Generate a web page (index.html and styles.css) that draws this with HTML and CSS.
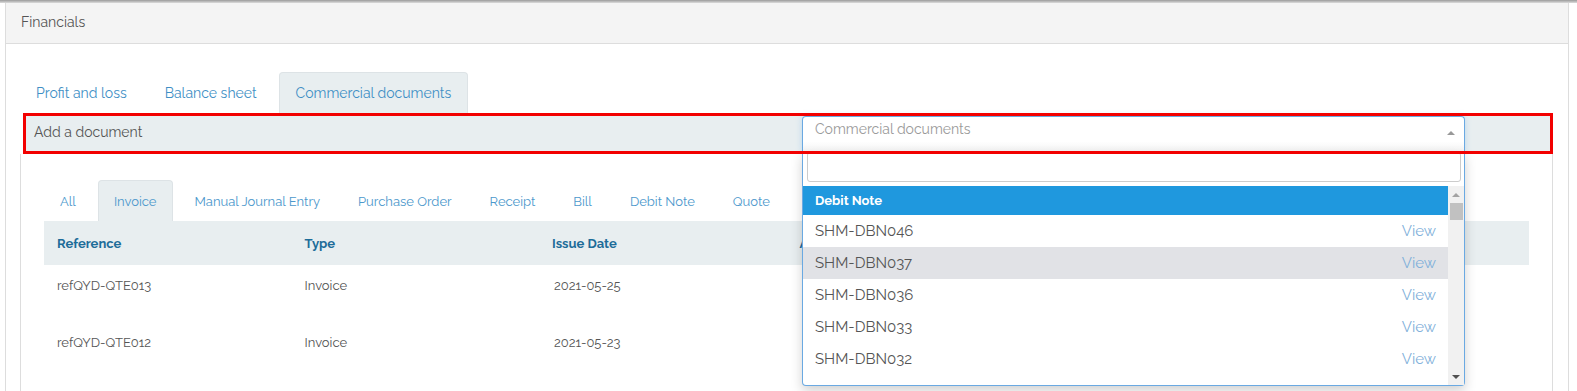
FILE: index.html
```html
<!DOCTYPE html>
<html lang="en">
<head>
<meta charset="utf-8">
<title>Financials</title>
<link rel="stylesheet" href="styles.css">
</head>
<body>
<div class="topbar"></div>
<div class="panel">
  <div class="panel-heading">Financials</div>
  <div class="panel-body">
    <ul class="tabs">
      <li class="tab">Profit and loss</li>
      <li class="tab">Balance sheet</li>
      <li class="tab active">Commercial documents</li>
    </ul>
    <div class="add-row">
      <div class="add-label">Add a document</div>
      <div class="select">
        <div class="select-box">
          <span class="placeholder">Commercial documents</span>
          <span class="caret-up"></span>
        </div>
        <div class="dropdown">
          <div class="search"><div class="search-input"></div></div>
          <div class="results">
            <div class="list">
              <div class="group">Debit Note</div>
              <div class="option"><span>SHM-DBN046</span><span class="view">View</span></div>
              <div class="option hl"><span>SHM-DBN037</span><span class="view">View</span></div>
              <div class="option"><span>SHM-DBN036</span><span class="view">View</span></div>
              <div class="option"><span>SHM-DBN033</span><span class="view">View</span></div>
              <div class="option"><span>SHM-DBN032</span><span class="view">View</span></div>
              <div class="option"><span>SHM-DBN031</span><span class="view">View</span></div>
            </div>
            <div class="scrollbar">
              <span class="arr-up"></span>
              <span class="thumb"></span>
              <span class="spacer"></span>
              <span class="arr-down"></span>
            </div>
          </div>
        </div>
      </div>
    </div>
    <div class="tab-content">
      <ul class="subtabs">
        <li class="subtab">All</li>
        <li class="subtab active">Invoice</li>
        <li class="subtab">Manual Journal Entry</li>
        <li class="subtab">Purchase Order</li>
        <li class="subtab">Receipt</li>
        <li class="subtab">Bill</li>
        <li class="subtab">Debit Note</li>
        <li class="subtab">Quote</li>
      </ul>
      <div class="table">
        <div class="trow thead">
          <div class="cell">Reference</div>
          <div class="cell">Type</div>
          <div class="cell">Issue Date</div>
          <div class="cell">Amount</div>
          <div class="cell">Status</div>
          <div class="cell">Actions</div>
        </div>
        <div class="trow">
          <div class="cell">refQYD-QTE013</div>
          <div class="cell">Invoice</div>
          <div class="cell date">2021-05-25</div>
          <div class="cell"></div>
          <div class="cell"></div>
          <div class="cell"></div>
        </div>
        <div class="trow">
          <div class="cell">refQYD-QTE012</div>
          <div class="cell">Invoice</div>
          <div class="cell date">2021-05-23</div>
          <div class="cell"></div>
          <div class="cell"></div>
          <div class="cell"></div>
        </div>
      </div>
    </div>
  </div>
</div>
</body>
</html>
```

FILE: styles.css
```css
* { box-sizing: border-box; }
html, body { margin: 0; padding: 0; background: #fff; }
body {
  font-family: Raleway, Lato, "Open Sans", "DejaVu Sans", sans-serif;
  font-variant-numeric: oldstyle-nums;
  color: #555;
  font-size: 14px;
  overflow: hidden;
  height: 391px;
}
ul { list-style: none; margin: 0; padding: 0; }

.topbar {
  height: 3px;
  background: linear-gradient(#9a9a9a, #dcdcdc);
}

.panel {
  margin: 0 8px 0 5px;
  border: 1px solid #ddd;
  border-top: none;
  border-bottom: none;
  height: 388px;
  overflow: hidden;
}
.panel-heading {
  height: 41px;
  background: #f4f4f4;
  border-bottom: 1px solid #ddd;
  padding: 0 15px;
  line-height: 38px;
  font-size: 14px;
  color: #555;
}
.panel-body {
  padding: 28px 15px 0 14px;
}

.tabs { display: flex; height: 41px; align-items: stretch; }
.tab {
  display: flex;
  align-items: center;
  padding: 0 15px;
  margin-right: 6px;
  font-size: 14px;
  color: #3f8fc5;
  border: 1px solid transparent;
  border-bottom: none;
  border-radius: 4px 4px 0 0;
}
.tab.active {
  background: #e8eef0;
  border-color: #dde3e6;
  padding: 0 16px;
}

.add-row {
  position: relative;
  margin-left: 3px;
  height: 41px;
  background: #e8eef0;
  display: grid;
  grid-template-columns: 779px 663px;
  align-items: start;
  padding-top: 3px;
}
.add-row::after {
  content: "";
  position: absolute;
  inset: 0;
  border: 3px solid #f20000;
  z-index: 20;
  pointer-events: none;
}
.add-label {
  padding-left: 11px;
  line-height: 32px;
  font-size: 14px;
  color: #555;
}

.select { position: relative; z-index: 10; }
.select-box {
  height: 36px;
  border: 1px solid #6aa9e2;
  border-bottom: none;
  border-radius: 4px 4px 0 0;
  background: linear-gradient(#fff 70%, #f2f2f2 100%);
  display: flex;
  align-items: center;
  justify-content: space-between;
  padding: 0 9px 12px 12px;
  box-shadow: 0 0 6px rgba(102, 175, 233, .35);
}
.placeholder { color: #9a9a9a; font-size: 14px; }
.caret-up {
  width: 0; height: 0;
  border-left: 4px solid transparent;
  border-right: 4px solid transparent;
  border-bottom: 4px solid #999;
  margin-top: 8px;
}

.dropdown {
  position: absolute;
  left: 0;
  right: 0;
  top: 36px;
  background: #fff;
  border: 1px solid #6aa9e2;
  border-top: none;
  border-radius: 0 0 4px 4px;
  box-shadow: 0 5px 12px rgba(0, 0, 0, .18);
}
.search { padding: 0 3px 4px 4px; }
.search-input {
  height: 30px;
  border: 1px solid #ccc;
  border-radius: 3px;
  background: #fff;
}
.results {
  display: flex;
  height: 199px;
  overflow: hidden;
}
.list { flex: 1; overflow: hidden; }
.group {
  height: 29px;
  background: #1f98de;
  color: #fff;
  font-weight: 700;
  font-size: 13px;
  display: flex;
  align-items: center;
  padding-left: 12px;
}
.option {
  height: 32px;
  display: flex;
  align-items: center;
  justify-content: space-between;
  padding: 0 12px;
  font-size: 15px;
  color: #555;
}
.option.hl { background: #e1e2e6; }
.view { color: #7fb0da; }

.scrollbar {
  width: 16px;
  background: #f1f1f1;
  display: flex;
  flex-direction: column;
  align-items: center;
}
.arr-up {
  margin-top: 7px;
  width: 0; height: 0;
  border-left: 4px solid transparent;
  border-right: 4px solid transparent;
  border-bottom: 4px solid #a3a3a3;
}
.thumb {
  margin-top: 6px;
  width: 13px;
  height: 17px;
  background: #c1c1c1;
}
.spacer { flex: 1; }
.arr-down {
  margin-bottom: 6px;
  width: 0; height: 0;
  border-left: 4px solid transparent;
  border-right: 4px solid transparent;
  border-top: 4px solid #505050;
}

.tab-content {
  border: 1px solid #ddd;
  border-top: none;
  padding: 26px 23px 0 23px;
  height: 260px;
}
.subtabs { display: flex; height: 41px; }
.subtab {
  display: flex;
  align-items: center;
  padding: 0 15px;
  margin-right: 6px;
  font-size: 13px;
  color: #4c98cc;
  border: 1px solid transparent;
  border-bottom: none;
  border-radius: 4px 4px 0 0;
}
.subtab.active {
  background: #e8eef0;
  border-color: #dde3e6;
}

.table { width: 100%; }
.trow {
  display: grid;
  grid-template-columns: repeat(6, 1fr);
  height: 57px;
}
.thead {
  height: 44px;
  background: #e8eef0;
  align-items: center;
}
.thead .cell {
  font-weight: 700;
  color: #1d6c99;
  font-size: 13px;
}
.cell {
  padding: 0 13px;
  font-size: 13px;
  color: #555;
}
.trow:not(.thead) .cell { padding-top: 13px; }
.date { padding-left: 15px; }
```
